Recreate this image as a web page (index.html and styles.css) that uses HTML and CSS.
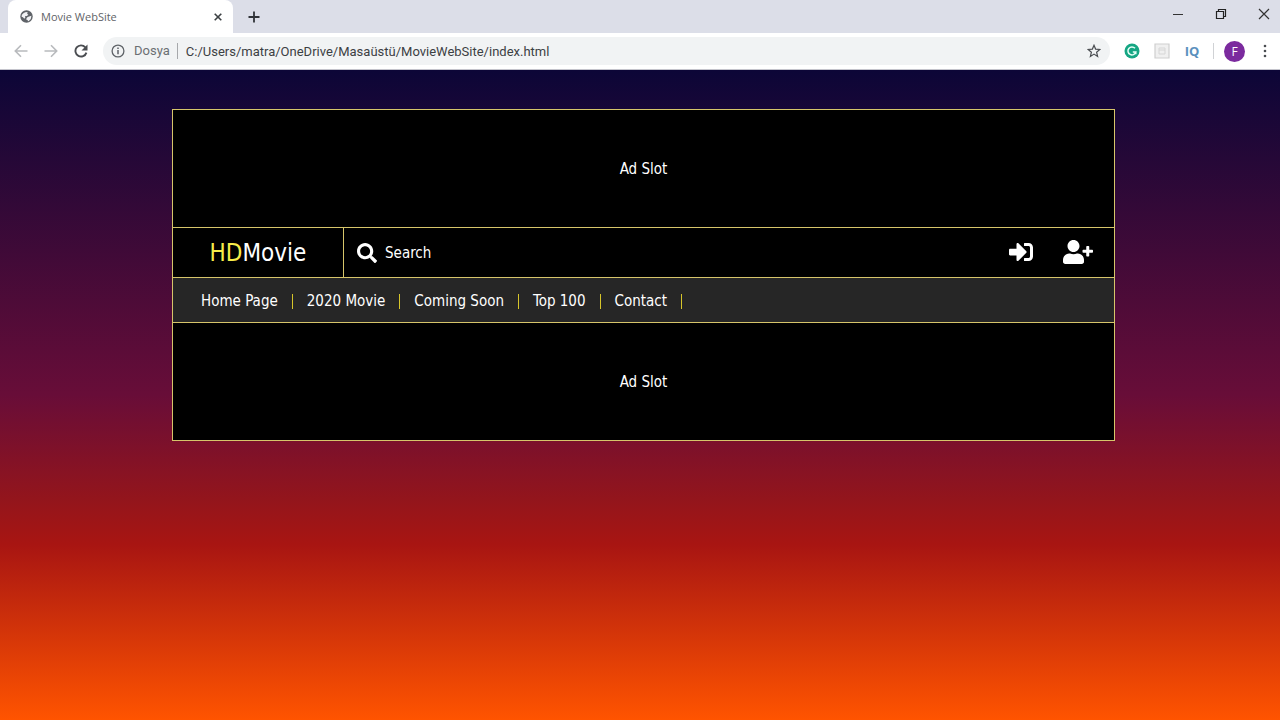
FILE: index.html
```html
<!DOCTYPE html>
<html lang="en">
<head>
<meta charset="utf-8">
<title>Movie WebSite</title>
<link rel="stylesheet" href="styles.css">
</head>
<body>
<div class="browser">
  <div class="tabstrip">
    <div class="tab">
      <svg class="tab-icon" viewBox="0 0 14 14" aria-hidden="true"><circle cx="7" cy="7" r="6.7" fill="#5f6368"/><path d="M2 5.2 4 3.3 6.500 2.200 8.500 2.600 7.600 4.100 9 5.200 7.400 6.500 5.300 6.800 5.800 8.100 4.600 9.400 3.200 7.900 1.700 7.300ZM8.200 7.500 12.300 6.200Q12.500 9.500 9.500 11.800L8.600 12 8.200 10.800 6.600 10.300 7.200 8.600Z" fill="#f1f2f4"/></svg>
      <span class="tab-title">Movie WebSite</span>
      <button class="tab-close" aria-label="Close tab"><svg width="8" height="8" viewBox="0 0 8 8"><path d="M.7.7 7.300 7.300M7.300.7.7 7.300" stroke="#3c4043" stroke-width="1.600"/></svg></button>
    </div>
    <button class="new-tab" aria-label="New tab"><svg width="12" height="12" viewBox="0 0 12 12"><path d="M6 .5v11M.5 6h11" stroke="#303338" stroke-width="1.800"/></svg></button>
    <div class="window-controls">
      <button aria-label="Minimize"><svg width="12" height="12" viewBox="0 0 12 12"><path d="M1 6.500h10" stroke="#333" stroke-width="1"/></svg></button>
      <button aria-label="Restore"><svg width="12" height="12" viewBox="0 0 12 12" fill="none" stroke="#222" stroke-width="1.200"><path d="M1.500 3.500h7v7h-7zM3.500 3.500v-2h7v7h-2"/></svg></button>
      <button aria-label="Close"><svg width="12" height="12" viewBox="0 0 12 12"><path d="M1 1l10 10M11 1 1 11" stroke="#333" stroke-width="1.200"/></svg></button>
    </div>
  </div>
  <div class="toolbar">
    <div class="nav-buttons">
      <button aria-label="Back"><svg width="14" height="14" viewBox="0 0 14 14" fill="none" stroke="#b8babd" stroke-width="1.600"><path d="M13.500 7H1.500M7 1.300 1.300 7 7 12.700"/></svg></button>
      <button aria-label="Forward"><svg width="14" height="14" viewBox="0 0 14 14" fill="none" stroke="#b8babd" stroke-width="1.600"><path d="M.5 7h12M7 1.300 12.700 7 7 12.700"/></svg></button>
      <button aria-label="Reload"><svg width="14" height="14" viewBox="0 0 14 14"><path d="M11.300 3.300A5.600 5.600 0 1 0 12.400 8.600" fill="none" stroke="#4a4d51" stroke-width="1.900"/><path d="M13.500.5v6h-6z" fill="#4a4d51"/></svg></button>
    </div>
    <div class="address">
      <svg width="14" height="14" viewBox="0 0 14 14" aria-hidden="true"><circle cx="7" cy="7" r="5.900" fill="none" stroke="#5f6368" stroke-width="1.300"/><path d="M7 6v4.300M7 3.500v1.500" stroke="#5f6368" stroke-width="1.500"/></svg>
      <label class="scheme" for="url">Dosya</label>
      <input class="url" id="url" type="text" value="C:/Users/matra/OneDrive/Masaüstü/MovieWebSite/index.html">
      <button class="bookmark" aria-label="Bookmark"><svg width="14" height="14" viewBox="0 0 14 14"><path d="M7 1.300 8.600 5.100 12.800 5.500 9.600 8.200 10.600 12.400 7 10.100 3.400 12.400 4.400 8.200 1.200 5.500 5.400 5.100Z" fill="none" stroke="#4a4d51" stroke-width="1.200"/></svg></button>
    </div>
    <div class="extensions">
      <button aria-label="Grammar extension"><svg width="16" height="16" viewBox="0 0 16 16"><circle cx="8" cy="8" r="7.500" fill="#15a683"/><path d="M11 5.300A4 4 0 1 0 11.800 9H8.800M11.800 8.500v2.700" fill="none" stroke="#e6fff7" stroke-width="1.500"/></svg></button>
      <button aria-label="Capture extension"><svg width="16" height="16" viewBox="0 0 16 16"><path d="M1 1h14v14H1z" fill="#f0f0f0" stroke="#cfcfcf" stroke-width="1.200"/><path d="M5 5h6v6H5zM5 7h6" fill="none" stroke="#d6d6d6"/></svg></button>
      <button class="iq">IQ</button>
    </div>
    <div class="profile">
      <button class="avatar" aria-label="Profile F">F</button>
      <button aria-label="Menu"><svg width="16" height="16" viewBox="0 0 16 16" fill="#4a4d51"><circle cx="8" cy="3" r="1.300"/><circle cx="8" cy="8" r="1.300"/><circle cx="8" cy="13" r="1.300"/></svg></button>
    </div>
  </div>
</div>
<main class="page">
  <div class="site">
    <section class="ad">Ad Slot</section>
    <header class="header">
      <a class="logo" href="#"><span class="logo-accent">HD</span>Movie</a>
      <form class="search">
        <label for="search" aria-label="Search"><svg class="search-icon" viewBox="0 0 512 512"><path fill="#fff" d="M505 442.700L405.300 343c-4.500-4.500-10.600-7-17-7H372c27.600-35.300 44-79.700 44-128C416 93.100 322.900 0 208 0S0 93.100 0 208s93.100 208 208 208c48.300 0 92.700-16.400 128-44v16.300c0 6.400 2.500 12.500 7 17l99.700 99.700c9.400 9.400 24.600 9.400 33.900 0l28.300-28.300c9.400-9.400 9.400-24.600.1-34zM208 336c-70.700 0-128-57.200-128-128 0-70.700 57.200-128 128-128 70.700 0 128 57.200 128 128 0 70.700-57.200 128-128 128z"/></svg></label>
        <input id="search" type="text" placeholder="Search">
      </form>
      <div class="account">
        <a href="#" aria-label="Sign in"><svg width="24" height="24" viewBox="0 0 512 512"><path fill="#fff" d="M416 448h-84c-6.600 0-12-5.400-12-12v-40c0-6.600 5.400-12 12-12h84c17.700 0 32-14.300 32-32V160c0-17.700-14.300-32-32-32h-84c-6.600 0-12-5.400-12-12V76c0-6.600 5.400-12 12-12h84c53 0 96 43 96 96v192c0 53-43 96-96 96zm-47-209L201 71c-15-15-41-4.500-41 17v96H24c-13.300 0-24 10.700-24 24v96c0 13.300 10.700 24 24 24h136v96c0 21.500 26 32 41 17l168-168c9.300-9.400 9.300-24.600 0-34z"/></svg></a>
        <a href="#" aria-label="Sign up"><svg width="30" height="24" viewBox="0 0 640 512"><path fill="#fff" d="M624 208h-64v-64c0-8.800-7.200-16-16-16h-32c-8.800 0-16 7.200-16 16v64h-64c-8.800 0-16 7.200-16 16v32c0 8.800 7.200 16 16 16h64v64c0 8.800 7.200 16 16 16h32c8.800 0 16-7.200 16-16v-64h64c8.800 0 16-7.200 16-16v-32c0-8.800-7.200-16-16-16zm-400 48c70.700 0 128-57.300 128-128S294.700 0 224 0 96 57.300 96 128s57.300 128 128 128zm89.600 32h-16.700c-22.200 10.200-46.900 16-72.900 16s-50.600-5.800-72.900-16h-16.700C60.200 288 0 348.200 0 422.400V464c0 26.500 21.500 48 48 48h352c26.500 0 48-21.500 48-48v-41.600c0-74.200-60.200-134.400-134.400-134.400z"/></svg></a>
      </div>
    </header>
    <nav class="menu">
      <a href="#">Home Page</a>
      <a href="#">2020 Movie</a>
      <a href="#">Coming Soon</a>
      <a href="#">Top 100</a>
      <a href="#">Contact</a>
    </nav>
    <section class="ad">Ad Slot</section>
  </div>
</main>
</body>
</html>
```
FILE: styles.css
```css
* { box-sizing: border-box; }
body {
  margin: 0;
  min-height: 100vh;
  display: flex;
  flex-direction: column;
  font-family: "DejaVu Sans Condensed", "Noto Sans", sans-serif;
  font-size: 15px;
}
button {
  padding: 0;
  border: 0;
  background: none;
  font: inherit;
  display: flex;
  align-items: center;
  justify-content: center;
}
input {
  min-width: 0;
  padding: 0;
  border: 0;
  outline: 0;
  background: none;
  font: inherit;
}
a { color: inherit; text-decoration: none; }
svg { display: block; flex: none; }

.browser { font-family: "Open Sans", sans-serif; background: #fff; border-bottom: 1px solid #c4c4cc; }
.tabstrip { display: flex; align-items: center; height: 33px; padding-left: 8px; background: #dcdee8; }
.tab {
  display: flex;
  align-items: center;
  align-self: stretch;
  width: 225px;
  padding: 0 11px 0 12px;
  gap: 8px;
  background: #fff;
  border-radius: 8px 8px 0 0;
}
.tab-icon { width: 13px; height: 13px; }
.tab-title { flex: 1; font-size: 11px; color: #5f6368; }
.tab-close { width: 8px; height: 16px; }
.new-tab { width: 42px; height: 28px; }
.window-controls { display: flex; gap: 31px; margin-left: auto; padding: 0 10px 5px 0; }
.window-controls button { width: 12px; height: 24px; }
.toolbar { display: flex; align-items: center; height: 36px; padding: 0 7px 0 14px; }
.nav-buttons { display: flex; gap: 16px; }
.address {
  flex: 1;
  display: flex;
  align-items: center;
  height: 28px;
  margin-left: 15px;
  padding: 0 9px 0 8px;
  border-radius: 14px;
  background: #f1f3f4;
}
.scheme { margin-left: 9px; padding-right: 7px; border-right: 1px solid #a6a8ab; font-family: Roboto, sans-serif; font-size: 13px; line-height: 16px; color: #6b6f73; }
.url { flex: 1; margin-left: 8px; font-family: Roboto, sans-serif; font-size: 13px; color: #3c4043; }
.extensions { display: flex; align-items: center; gap: 14px; margin-left: 14px; padding-right: 13px; border-right: 1px solid #d0d2d5; }
.iq { width: 16px; font-size: 13px; line-height: 16px; font-weight: 700; color: #5a90bd; }
.profile { display: flex; align-items: center; gap: 12px; margin-left: 10px; }
.avatar { width: 21px; height: 21px; border-radius: 50%; background: #7b2a9e; color: #fff; font-size: 12px; }

.page {
  flex: 1;
  padding: 39px 165px 39px 172px;
  background: linear-gradient(#0c0637 0%, #680d38 50%, #93151c 66%, #a81512 73%, #ff5400 100%);
  color: #fff;
}
.site { border: 1px solid #d6c56a; background: #000; }
.ad { display: flex; align-items: center; justify-content: center; height: 117px; }
.header { display: flex; height: 51px; border: solid #d6c56a; border-width: 1px 0; }
.logo {
  display: flex;
  align-items: center;
  justify-content: center;
  width: 171px;
  border-right: 1px solid #d6c56a;
  font-size: 24px;
}
.logo-accent { color: #f7ec4a; }
.search { flex: 1; display: flex; align-items: center; gap: 8px; padding-left: 13px; }
.search-icon { width: 20px; height: 20px; }
.search input { flex: 1; color: #fff; }
.search input::placeholder { color: #fff; opacity: 1; }
.account { display: flex; align-items: center; gap: 30px; padding: 0 21px 2px 0; }
.menu { display: flex; align-items: center; height: 45px; padding: 2px 0 0 14px; border-bottom: 1px solid #d6c56a; background: #262626; }
.menu a { padding: 0 14px; border-right: 1px solid #d6c52a; line-height: 15px; }
```
